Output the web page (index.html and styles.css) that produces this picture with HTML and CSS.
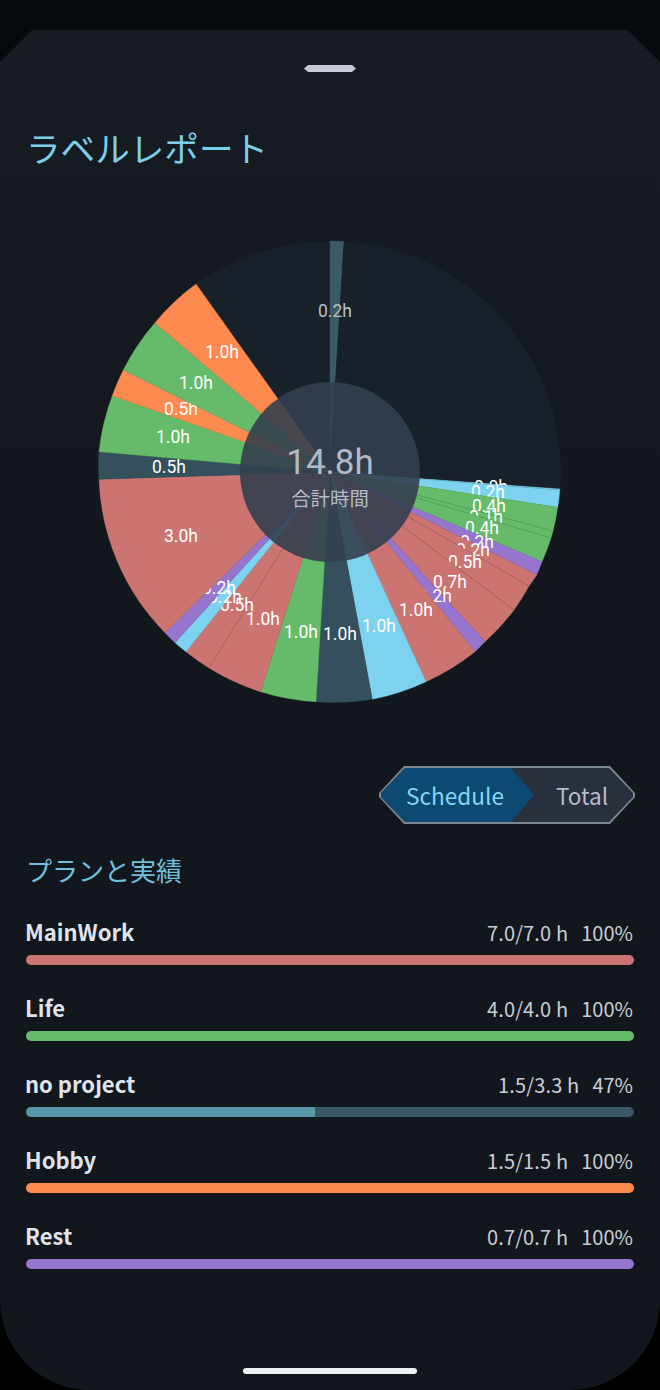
FILE: index.html
```html
<!DOCTYPE html>
<html lang="ja">
<head>
	<meta charset="utf-8">
	<title>ラベルレポート</title>
	<link rel="stylesheet" href="styles.css">
</head>
<body>
<div class="sheet">
	<div class="handle"></div>
	<h1 class="title">ラベルレポート</h1>

	<!-- slices are in drawing order: a later slice covers the label before it -->
	<svg class="pie" viewBox="0 221 660 520" width="660" height="520">
		<path class="s-dark" d="M330 472L196 284A231 231 0 0 1 330 241Z"/>
		<path class="s-teal-top" d="M330 472L330 241A231 231 0 0 1 344 241.4Z"/>
		<path class="s-dark" d="M330 472L344 241.4A231 231 0 0 1 560 489Z"/>
		<text class="lbl lbl-dim" x="335" y="317">0.2h</text>

		<path class="s-blue" d="M330 472L560 489A231 231 0 0 1 559.8 490Z"/>
		<text class="lbl" x="491" y="493">0.0h</text>
		<path class="s-blue" d="M330 472L559.8 490A231 231 0 0 1 557.7 507.3Z"/>
		<text class="lbl" x="488" y="498">0.2h</text>
		<path class="s-green" d="M330 472L557.7 507.3A231 231 0 0 1 553 531Z"/>
		<text class="lbl" x="489" y="512">0.4h</text>
		<path class="s-green" d="M330 472L553 531A231 231 0 0 1 551 538Z"/>
		<text class="lbl" x="486" y="523">0.1h</text>
		<path class="s-green" d="M330 472L551 538A231 231 0 0 1 542 561.7Z"/>
		<text class="lbl" x="482" y="534">0.4h</text>
		<path class="s-purple" d="M330 472L542 561.7A231 231 0 0 1 536.7 575Z"/>
		<text class="lbl" x="477" y="548">0.2h</text>
		<path class="s-red" d="M330 472L536.7 575A231 231 0 0 1 529 586Z"/>
		<text class="lbl" x="473" y="556">0.2h</text>
		<path class="s-red" d="M330 472L529 586A231 231 0 0 1 514 610Z"/>
		<text class="lbl" x="465" y="568">0.5h</text>
		<path class="s-red" d="M330 472L514 610A231 231 0 0 1 485 641.7Z"/>
		<text class="lbl" x="450" y="588">0.7h</text>
		<path class="s-purple" d="M330 472L485 641.7A231 231 0 0 1 475 651.7Z"/>
		<text class="lbl" x="435" y="602">0.2h</text>
		<path class="s-red" d="M330 472L475 651.7A231 231 0 0 1 426 681.7Z"/>
		<text class="lbl" x="416" y="616">1.0h</text>
		<path class="s-blue" d="M330 472L426 681.7A231 231 0 0 1 372.3 699.3Z"/>
		<text class="lbl" x="379" y="632">1.0h</text>
		<path class="s-teal" d="M330 472L372.3 699.3A231 231 0 0 1 316 701.7Z"/>
		<text class="lbl" x="340" y="640">1.0h</text>
		<path class="s-green" d="M330 472L316 701.7A231 231 0 0 1 260.7 691.7Z"/>
		<text class="lbl" x="301" y="638">1.0h</text>
		<path class="s-red" d="M330 472L260.7 691.7A231 231 0 0 1 209 668Z"/>
		<text class="lbl" x="263" y="625">1.0h</text>
		<path class="s-red" d="M330 472L209 668A231 231 0 0 1 186 651.7Z"/>
		<text class="lbl" x="237" y="611">0.5h</text>
		<path class="s-blue" d="M330 472L186 651.7A231 231 0 0 1 175 642.7Z"/>
		<text class="lbl" x="225" y="603">0.2h</text>
		<path class="s-purple" d="M330 472L175 642.7A231 231 0 0 1 165 632.7Z"/>
		<text class="lbl" x="219" y="594">0.2h</text>
		<path class="s-red" d="M330 472L165 632.7A231 231 0 0 1 99 479.3Z"/>
		<text class="lbl" x="181" y="542">3.0h</text>
		<path class="s-teal" d="M330 472L99 479.3A231 231 0 0 1 99 451.7Z"/>
		<text class="lbl" x="169" y="473">0.5h</text>
		<path class="s-green" d="M330 472L99 451.7A231 231 0 0 1 112.3 395.7Z"/>
		<text class="lbl" x="173" y="443">1.0h</text>
		<path class="s-orange" d="M330 472L112.3 395.7A231 231 0 0 1 123.3 370Z"/>
		<text class="lbl" x="181" y="415">0.5h</text>
		<path class="s-green" d="M330 472L123.3 370A231 231 0 0 1 155 322.7Z"/>
		<text class="lbl" x="196" y="389">1.0h</text>
		<path class="s-orange" d="M330 472L155 322.7A231 231 0 0 1 196 284Z"/>
		<text class="lbl" x="222" y="358">1.0h</text>

		<!-- hairlines between slices of one colour -->
		<path class="seam" d="M330 472L559.8 490M330 472L553 531M330 472L551 538M330 472L529 586M330 472L514 610M330 472L209 668"/>

		<circle class="hole" cx="330" cy="472" r="90"/>
		<text class="hole-total" x="330" y="474">14.8h</text>
		<text class="hole-caption" x="330" y="506">合計時間</text>
	</svg>

	<div class="toggle-row">
		<div class="toggle">
			<div class="toggle-in">
				<div class="seg seg-on">Schedule</div>
				<div class="seg">Total</div>
			</div>
		</div>
	</div>

	<h2 class="subtitle">プランと実績</h2>

	<div class="plans">
		<div class="plan">
			<div class="plan-head"><span class="plan-name">MainWork</span><span class="plan-hours">7.0/7.0 h</span><span class="plan-pct">100%</span></div>
			<div class="bar bar-red"><div class="bar-fill" style="width:100%"></div></div>
		</div>
		<div class="plan">
			<div class="plan-head"><span class="plan-name">Life</span><span class="plan-hours">4.0/4.0 h</span><span class="plan-pct">100%</span></div>
			<div class="bar bar-green"><div class="bar-fill" style="width:100%"></div></div>
		</div>
		<div class="plan">
			<div class="plan-head"><span class="plan-name">no project</span><span class="plan-hours">1.5/3.3 h</span><span class="plan-pct">47%</span></div>
			<div class="bar bar-teal"><div class="bar-fill" style="width:47.5%"></div></div>
		</div>
		<div class="plan">
			<div class="plan-head"><span class="plan-name">Hobby</span><span class="plan-hours">1.5/1.5 h</span><span class="plan-pct">100%</span></div>
			<div class="bar bar-orange"><div class="bar-fill" style="width:100%"></div></div>
		</div>
		<div class="plan">
			<div class="plan-head"><span class="plan-name">Rest</span><span class="plan-hours">0.7/0.7 h</span><span class="plan-pct">100%</span></div>
			<div class="bar bar-purple"><div class="bar-fill" style="width:100%"></div></div>
		</div>
	</div>

	<div class="home"></div>
</div>
</body>
</html>
```

FILE: styles.css
```css
html, body {
	margin: 0;
	height: 1390px;
	overflow: hidden;
}
body {
	background: linear-gradient(#05080d 0, #05080d 100px, #000 100%);
	font-family: "Noto Sans CJK JP", "Noto Sans", sans-serif;
}
.sheet {
	box-sizing: border-box;
	height: 1360px;
	margin-top: 30px;
	background: linear-gradient(#161c22, #12171e 45%);
	border-radius: 0 0 90px 90px;
	clip-path: polygon(32px 0, calc(100% - 32px) 0, 100% 32px, 100% 100%, 0 100%, 0 32px);
	display: flex;
	flex-direction: column;
}
.handle {
	width: 52px;
	height: 7px;
	margin: 35px auto 0;
	background: #c5c9d6;
	clip-path: polygon(4px 0, calc(100% - 4px) 0, 100% 50%, calc(100% - 4px) 100%, 4px 100%, 0 50%);
}
.title {
	margin: 50px 0 0 26px;
	font-size: 34.6px;
	line-height: 50px;
	font-weight: 400;
	color: #7dcfe9;
}
.pie {
	display: block;
	margin-top: 49px;
}
path { stroke-width: .4; }
.s-dark { fill: #18212a; stroke: #18212a; }
.s-teal-top { fill: #3c5a64; stroke: #3c5a64; }
.s-teal { fill: #33505c; stroke: #33505c; }
.s-blue { fill: #7dd3ef; stroke: #7dd3ef; }
.s-green { fill: #66bb6a; stroke: #66bb6a; }
.s-purple { fill: #9575cd; stroke: #9575cd; }
.s-red { fill: #cb7472; stroke: #cb7472; }
.s-orange { fill: #ff8a50; stroke: #ff8a50; }
.seam {
	fill: none;
	stroke: rgba(0, 0, 0, .15);
	stroke-width: .5;
}
.lbl {
	font-family: Roboto, sans-serif;
	font-size: 17.5px;
	fill: #fff;
	text-anchor: middle;
}
.lbl-dim { fill: #b9c0c7; }
.hole { fill: rgba(52, 63, 78, .9); }
.hole-total {
	font-family: Roboto, sans-serif;
	font-size: 35px;
	fill: #b0bac6;
	text-anchor: middle;
}
.hole-caption {
	font-family: "Noto Sans CJK JP", sans-serif;
	font-size: 19.4px;
	fill: #b3bcc8;
	text-anchor: middle;
}
.toggle-row {
	display: flex;
	justify-content: flex-end;
	padding: 25px 25px 0 0;
}
.toggle {
	box-sizing: border-box;
	width: 256px;
	height: 58px;
	padding: 2px;
	background: #7b8791;
	clip-path: polygon(25px 0, calc(100% - 25px) 0, 100% calc(50% - 2px), 100% calc(50% + 2px), calc(100% - 25px) 100%, 25px 100%, 0 calc(50% + 2px), 0 calc(50% - 2px));
}
.toggle-in {
	display: flex;
	height: 100%;
	background: #282f3d;
	clip-path: polygon(24px 0, calc(100% - 24px) 0, 100% calc(50% - 2px), 100% calc(50% + 2px), calc(100% - 24px) 100%, 24px 100%, 0 calc(50% + 2px), 0 calc(50% - 2px));
}
.seg {
	flex: 1;
	display: flex;
	align-items: center;
	justify-content: center;
	font-size: 22.6px;
	color: #b4bcc9;
	padding-right: 3px;
}
.seg-on {
	flex: none;
	width: 148px;
	padding: 0 5px 0 0;
	color: #86d6f2;
	background: #0d4a73;
	clip-path: polygon(0 0, calc(100% - 23px) 0, 100% 50%, calc(100% - 23px) 100%, 0 100%);
}
.subtitle {
	margin: 26px 0 0 26px;
	font-size: 26px;
	line-height: 40px;
	font-weight: 400;
	color: #6fc0dc;
}
.plans {
	margin: 21px 26px 0;
	display: flex;
	flex-direction: column;
	gap: 22px;
}
.plan-head {
	display: flex;
	align-items: baseline;
	height: 44px;
	line-height: 40px;
	color: #c9ced6;
	font-size: 20px;
}
.plan-name {
	margin: 0 auto 0 -1px;
	font-size: 22px;
	font-weight: 700;
	color: #dfe3ec;
}
.plan-hours { letter-spacing: .15px; }
.plan-pct { margin: 0 1px 0 13px; }
.bar {
	height: 10px;
	border-radius: 5px;
	overflow: hidden;
}
.bar-fill { height: 100%; }
.bar-red .bar-fill { background: #cb7472; }
.bar-green .bar-fill { background: #66bb6a; }
.bar-teal { background: #3b5866; }
.bar-teal .bar-fill { background: #5696a8; }
.bar-orange .bar-fill { background: #ff8a50; }
.bar-purple .bar-fill { background: #9575cd; }
.home {
	width: 174px;
	height: 6px;
	margin: auto auto 16px;
	border-radius: 3px;
	background: #eceef0;
}
```
